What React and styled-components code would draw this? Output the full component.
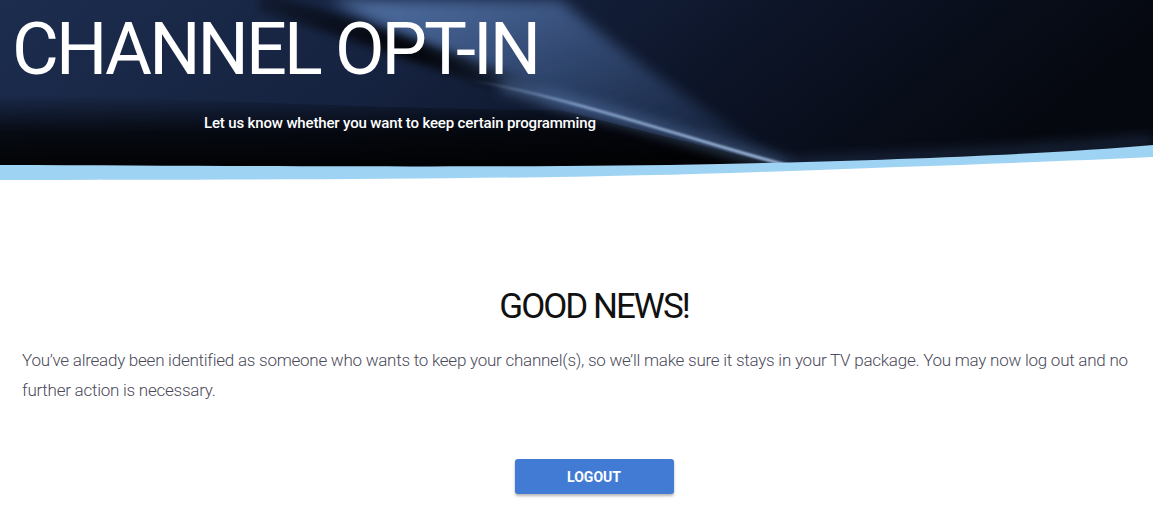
import styled, { createGlobalStyle } from "styled-components";

const GlobalStyle = createGlobalStyle`
  html, body {
    margin: 0;
    padding: 0;
    background: #ffffff;
  }
  body {
    font-family: Roboto, "Liberation Sans", sans-serif;
  }
`;

export default function App() {
  const handleLogout = () => {};

  return (
    <Page>
      <GlobalStyle />
      <Banner>
        <BannerArt viewBox="0 0 1153 185" preserveAspectRatio="none" aria-hidden="true">
          <defs>
            <linearGradient id="fundo" x1="0" y1="0" x2="1" y2="0.2">
              <stop offset="0" stopColor="#1d2d4e" />
              <stop offset="0.4" stopColor="#15223f" />
              <stop offset="0.7" stopColor="#0c1325" />
              <stop offset="1" stopColor="#05080f" />
            </linearGradient>
            <linearGradient id="sombra" x1="0" y1="0" x2="0" y2="1">
              <stop offset="0" stopColor="#000000" stopOpacity="0" />
              <stop offset="0.5" stopColor="#000000" stopOpacity="0.75" />
              <stop offset="1" stopColor="#000000" stopOpacity="0.95" />
            </linearGradient>
            <linearGradient id="luz" x1="0" y1="0" x2="1" y2="1">
              <stop offset="0" stopColor="#5a7cb2" stopOpacity="0.9" />
              <stop offset="1" stopColor="#2a4573" stopOpacity="0.2" />
            </linearGradient>
            <linearGradient id="borda" gradientUnits="userSpaceOnUse" x1="470" y1="0" x2="790" y2="0">
              <stop offset="0" stopColor="#a9c6ee" stopOpacity="0" />
              <stop offset="0.35" stopColor="#a9c6ee" stopOpacity="0.7" />
              <stop offset="1" stopColor="#b5d0f2" stopOpacity="1" />
            </linearGradient>
            <linearGradient id="faixaPreta" gradientUnits="userSpaceOnUse" x1="260" y1="0" x2="560" y2="0">
              <stop offset="0" stopColor="#000000" stopOpacity="0.3" />
              <stop offset="0.5" stopColor="#000000" stopOpacity="0.85" />
              <stop offset="1" stopColor="#000000" stopOpacity="0" />
            </linearGradient>
            <filter id="brilho" x="-20%" y="-50%" width="140%" height="200%">
              <feGaussianBlur stdDeviation="7" />
            </filter>
            <filter id="brilhoMedio" x="-20%" y="-50%" width="140%" height="200%">
              <feGaussianBlur stdDeviation="4" />
            </filter>
            <filter id="brilhoFino" x="-20%" y="-50%" width="140%" height="200%">
              <feGaussianBlur stdDeviation="1" />
            </filter>
          </defs>
          <rect x="0" y="0" width="1153" height="185" fill="url(#fundo)" />
          {/* faixa de luz larga */}
          <path d="M330 0 L 560 0 C 620 50, 700 110, 790 166 L 560 110 C 480 70, 400 35, 330 0 Z" fill="url(#luz)" filter="url(#brilho)" />
          {/* sombra da parte de baixo */}
          <path d="M0 95 C 220 100, 420 110, 560 110 C 640 130, 720 150, 790 168 L 0 170 Z" fill="url(#sombra)" />
          {/* faixa preta diagonal */}
          <path d="M260 0 C 350 30, 450 62, 560 100" stroke="url(#faixaPreta)" strokeWidth="20" fill="none" filter="url(#brilhoMedio)" />
          {/* borda brilhante */}
          <path d="M500 85 C 590 105, 690 140, 790 166" stroke="#6f94cc" strokeWidth="10" fill="none" opacity="0.5" filter="url(#brilho)" />
          <path d="M470 80 C 580 100, 690 140, 790 166" stroke="url(#borda)" strokeWidth="2.5" fill="none" filter="url(#brilhoFino)" />
          <path d="M790 165 C 900 158, 1050 152, 1153 141" stroke="#4f75b0" strokeWidth="6" fill="none" opacity="0.5" filter="url(#brilho)" />
          {/* onda azul clara */}
          <path d="M0 165 C 300 166, 520 168, 720 164 C 900 160, 1050 154, 1153 145 L 1153 185 L 0 185 Z" fill="#9fd3f3" />
          <path d="M0 180 C 300 180, 560 179, 760 172 C 920 166, 1050 162, 1153 157 L 1153 185 L 0 185 Z" fill="#ffffff" />
        </BannerArt>
        <BannerText>
          <Titulo>CHANNEL OPT-IN</Titulo>
          <Subtitulo>Let us know whether you want to keep certain programming</Subtitulo>
        </BannerText>
      </Banner>

      <Conteudo>
        <Manchete>GOOD NEWS!</Manchete>
        <Mensagem>
          You’ve already been identified as someone who wants to keep your channel(s), so we’ll make sure it stays in
          your TV package. You may now log out and no further action is necessary.
        </Mensagem>
        <AreaBotao>
          <BotaoLogout onClick={handleLogout}>Logout</BotaoLogout>
        </AreaBotao>
      </Conteudo>
    </Page>
  );
}

// Estilização
const Page = styled.div`
  width: 100%;
  min-height: 520px;
  background: #ffffff;
  overflow: hidden;
`;

const Banner = styled.header`
  position: relative;
  height: 185px;
`;

const BannerArt = styled.svg`
  position: absolute;
  inset: 0;
  width: 100%;
  height: 100%;
  display: block;
`;

const BannerText = styled.div`
  position: relative;
  display: flex;
  flex-direction: column;
  padding: 10px 0 0 12px;
`;

const Titulo = styled.h1`
  margin: 0;
  font-family: Roboto, "Liberation Sans", sans-serif;
  font-weight: 400;
  font-size: 72px;
  line-height: 80px;
  letter-spacing: -2.9px;
  color: #ffffff;
`;

const Subtitulo = styled.p`
  margin: 24px 0 0 192px;
  font-family: Roboto, "Liberation Sans", sans-serif;
  font-weight: 500;
  font-size: 15px;
  letter-spacing: -0.15px;
  color: #ffffff;
`;

const Conteudo = styled.main`
  display: flex;
  flex-direction: column;
  padding: 101px 0 0 22px;
`;

const Manchete = styled.h2`
  margin: 0 0 0 13px;
  text-align: center;
  font-family: Roboto, "Liberation Sans", sans-serif;
  font-weight: 400;
  font-size: 35px;
  line-height: 42px;
  letter-spacing: -2px;
  color: #111111;
`;

const Mensagem = styled.p`
  margin: 17px 0 0 0;
  padding-right: 10px;
  font-family: Roboto, "Liberation Sans", sans-serif;
  font-weight: 300;
  font-size: 17px;
  line-height: 30px;
  letter-spacing: -0.25px;
  color: #4b4a5a;
`;

const AreaBotao = styled.div`
  display: flex;
  justify-content: center;
  margin: 54px 0 0 13px;
`;

const BotaoLogout = styled.button`
  width: 159px;
  height: 35px;
  border: none;
  border-radius: 3px;
  background: #417bd3;
  color: #ffffff;
  font-family: Roboto, "Liberation Sans", sans-serif;
  font-weight: 700;
  font-size: 14px;
  text-transform: uppercase;
  box-shadow: 0 2px 3px rgba(0, 0, 0, 0.3);
  cursor: pointer;
`;
